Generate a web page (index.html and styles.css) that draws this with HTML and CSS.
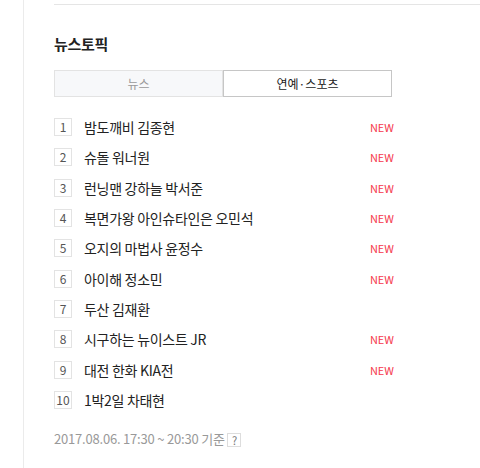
FILE: index.html
```html
<!DOCTYPE html>
<html>
<head>
	<meta charset="utf-8">
	<title>뉴스토픽</title>
	<link rel="stylesheet" href="styles.css">
</head>
<body>
	<div class="wrap">
		<div class="topline"></div>
		<h2 class="title">뉴스토픽</h2>
		<div class="tabs">
			<a class="tab">뉴스</a>
			<a class="tab on">연예·스포츠</a>
		</div>
		<ol class="rank">
			<li><span class="num">1</span><span class="kw">밤도깨비 김종현</span><span class="new">NEW</span></li>
			<li><span class="num">2</span><span class="kw">슈돌 워너원</span><span class="new">NEW</span></li>
			<li><span class="num">3</span><span class="kw">런닝맨 강하늘 박서준</span><span class="new">NEW</span></li>
			<li><span class="num">4</span><span class="kw">복면가왕 아인슈타인은 오민석</span><span class="new">NEW</span></li>
			<li><span class="num">5</span><span class="kw">오지의 마법사 윤정수</span><span class="new">NEW</span></li>
			<li><span class="num">6</span><span class="kw">아이해 정소민</span><span class="new">NEW</span></li>
			<li><span class="num">7</span><span class="kw">두산 김재환</span></li>
			<li><span class="num">8</span><span class="kw">시구하는 뉴이스트 JR</span><span class="new">NEW</span></li>
			<li><span class="num">9</span><span class="kw">대전 한화 KIA전</span><span class="new">NEW</span></li>
			<li><span class="num">10</span><span class="kw">1박2일 차태현</span></li>
		</ol>
		<p class="time">2017.08.06. 17:30 ~ 20:30 기준 <span class="help">?</span></p>
	</div>
</body>
</html>
```
FILE: styles.css
```css
body {
  margin: 0;
  background: #fff;
  font-family: "Noto Sans CJK KR", "Noto Sans", sans-serif;
  color: #222;
}

.wrap {
  margin-left: 23px;
  border-left: 1px solid #ebebeb;
  padding-left: 30px;
  height: 468px;
  box-sizing: border-box;
}

.topline {
  height: 4px;
  border-bottom: 1px solid #e5e5e5;
}

.title {
  margin: 29px 0 0;
  font-size: 15px;
  font-weight: bold;
  line-height: 20px;
  letter-spacing: -0.3px;
}

.tabs {
  display: flex;
  width: 338px;
  margin-top: 16px;
}

.tab {
  flex: 1;
  height: 27px;
  line-height: 26px;
  text-align: center;
  font-size: 12px;
  box-sizing: border-box;
  color: #999;
  background: #f7f8fa;
  border: 1px solid #e3e3e3;
}

.tab.on {
  color: #222;
  background: #fff;
  border-color: #c6c6c6;
}

.rank {
  list-style: none;
  margin: 15px 0 0;
  padding: 0;
  width: 340px;
}

.rank li {
  display: flex;
  align-items: center;
  height: 30.33px;
  font-size: 14px;
}

.num {
  width: 18px;
  height: 18px;
  box-sizing: border-box;
  border: 1px solid #e3e3e3;
  font-size: 12px;
  line-height: 16px;
  text-align: center;
  color: #555;
  margin-right: 12px;
}

.kw {
  flex: 1;
  letter-spacing: -0.3px;
}

.new {
  font-size: 11px;
  color: #f5394d;
}

.time {
  margin: 14px 0 0;
  font-size: 13px;
  color: #999;
  letter-spacing: -0.2px;
}

.help {
  display: inline-block;
  width: 14px;
  height: 14px;
  line-height: 12px;
  box-sizing: border-box;
  border: 1px solid #ddd;
  text-align: center;
  font-size: 11px;
  color: #777;
  vertical-align: -1px;
}
```
